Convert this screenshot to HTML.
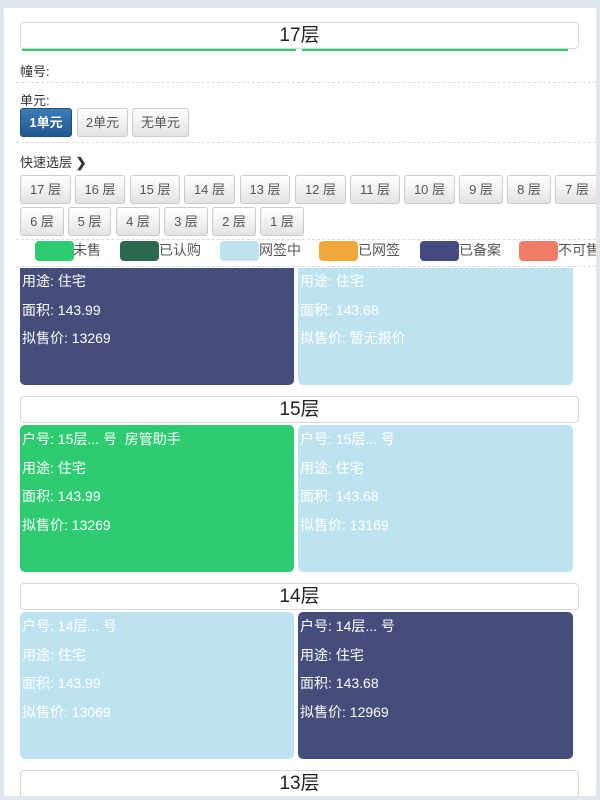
<!DOCTYPE html>
<html><head><meta charset="utf-8"><style>
*{box-sizing:border-box;margin:0;padding:0}
body{width:600px;height:800px;background:#dfe6ee;font-family:"Liberation Sans","Noto Sans CJK SC",sans-serif;position:relative;overflow:hidden;color:#333}
.panel{position:absolute;left:4px;top:8px;width:592px;height:788px;background:#fff;overflow:hidden}
.a{position:absolute;white-space:nowrap}
.fh{position:absolute;left:16px;width:559px;height:27px;border:1px solid #d8d8d8;border-radius:4px;text-align:center;font-size:19px;line-height:26px;color:#222;background:#fff}
.lbl{font-size:13px;color:#333}
.dash{position:absolute;left:12px;right:0;border-top:1px dashed #ddd}
.btn{position:absolute;height:29px;border:1px solid #ccc;border-radius:3px;background:linear-gradient(#fff,#e3e3e3);font-size:13px;color:#555;line-height:27px;text-align:center;white-space:nowrap}
.sw{position:absolute;top:233px;width:39px;height:20px;border-radius:4px}
.lg{position:absolute;top:232px;font-size:14px;color:#555;white-space:nowrap}
.card{position:absolute;border-radius:5px;color:#fff;font-size:14px;padding-left:2px;white-space:nowrap}
.card div{height:28.5px;line-height:20px}
.g{background:#2ecc71}.n{background:#454e7a}.l{background:#bee3f0}
</style></head><body>
<div class="panel">
<div class="fh" style="top:14px">17层</div>
<div class="a" style="left:18px;top:41px;width:274px;height:2px;background:#2ecc71"></div>
<div class="a" style="left:298px;top:41px;width:266px;height:2px;background:#2ecc71"></div>
<div class="a lbl" style="left:16px;top:53px">幢号:</div>
<div class="dash" style="top:74px"></div>
<div class="a lbl" style="left:16px;top:82px">单元:</div>
<div class="btn" style="left:16px;top:100px;width:52px;background:linear-gradient(#3a7cb8,#22588f);border-color:#21507f;color:#fff;font-weight:bold">1单元</div>
<div class="btn" style="left:73px;top:100px;width:51px">2单元</div>
<div class="btn" style="left:128px;top:100px;width:57px">无单元</div>
<div class="dash" style="top:134px"></div>
<div class="a lbl" style="left:16px;top:144px">快速选层 <b>&#10095;</b></div>
<div class="btn" style="left:16px;top:167px;width:51px">17 层</div>
<div class="btn" style="left:71px;top:167px;width:50px">16 层</div>
<div class="btn" style="left:126px;top:167px;width:50px">15 层</div>
<div class="btn" style="left:180px;top:167px;width:51px">14 层</div>
<div class="btn" style="left:236px;top:167px;width:50px">13 层</div>
<div class="btn" style="left:291px;top:167px;width:51px">12 层</div>
<div class="btn" style="left:346px;top:167px;width:50px">11 层</div>
<div class="btn" style="left:400px;top:167px;width:51px">10 层</div>
<div class="btn" style="left:455px;top:167px;width:44px">9 层</div>
<div class="btn" style="left:503px;top:167px;width:44px">8 层</div>
<div class="btn" style="left:551px;top:167px;width:44px">7 层</div>
<div class="btn" style="left:16px;top:199px;width:44px">6 层</div>
<div class="btn" style="left:64px;top:199px;width:43px">5 层</div>
<div class="btn" style="left:112px;top:199px;width:44px">4 层</div>
<div class="btn" style="left:160px;top:199px;width:44px">3 层</div>
<div class="btn" style="left:208px;top:199px;width:44px">2 层</div>
<div class="btn" style="left:256px;top:199px;width:44px">1 层</div>
<div class="dash" style="top:231px"></div>
<div class="sw" style="left:31px;background:#2ecc71"></div><div class="lg" style="left:69px">未售</div>
<div class="sw" style="left:116px;background:#2b6a50"></div><div class="lg" style="left:155px">已认购</div>
<div class="sw" style="left:216px;background:#bee3f0"></div><div class="lg" style="left:255px">网签中</div>
<div class="sw" style="left:315px;background:#f0a83a"></div><div class="lg" style="left:354px">已网签</div>
<div class="sw" style="left:416px;background:#434a80"></div><div class="lg" style="left:455px">已备案</div>
<div class="sw" style="left:515px;background:#f07e66"></div><div class="lg" style="left:554px">不可售</div>
<div class="dash" style="top:258px"></div>

<div class="card n" style="left:16px;top:260px;width:274px;height:117px;border-radius:0 0 5px 5px;padding-top:3px"><div>用途: 住宅</div><div>面积: 143.99</div><div>拟售价: 13269</div></div>
<div class="card l" style="left:294px;top:260px;width:275px;height:117px;border-radius:0 0 5px 5px;padding-top:3px"><div>用途: 住宅</div><div>面积: 143.68</div><div>拟售价: 暂无报价</div></div>

<div class="fh" style="top:388px">15层</div>
<div class="card g" style="left:16px;top:417px;width:274px;height:147px;padding-top:4px"><div>户号: 15层... 号 &nbsp;房管助手</div><div>用途: 住宅</div><div>面积: 143.99</div><div>拟售价: 13269</div></div>
<div class="card l" style="left:294px;top:417px;width:275px;height:147px;padding-top:4px"><div>户号: 15层... 号</div><div>用途: 住宅</div><div>面积: 143.68</div><div>拟售价: 13169</div></div>

<div class="fh" style="top:575px">14层</div>
<div class="card l" style="left:16px;top:604px;width:274px;height:147px;padding-top:4px"><div>户号: 14层... 号</div><div>用途: 住宅</div><div>面积: 143.99</div><div>拟售价: 13069</div></div>
<div class="card n" style="left:294px;top:604px;width:275px;height:147px;padding-top:4px"><div>户号: 14层... 号</div><div>用途: 住宅</div><div>面积: 143.68</div><div>拟售价: 12969</div></div>

<div class="fh" style="top:762px;height:30px">13层</div>
</div>
</body></html>
